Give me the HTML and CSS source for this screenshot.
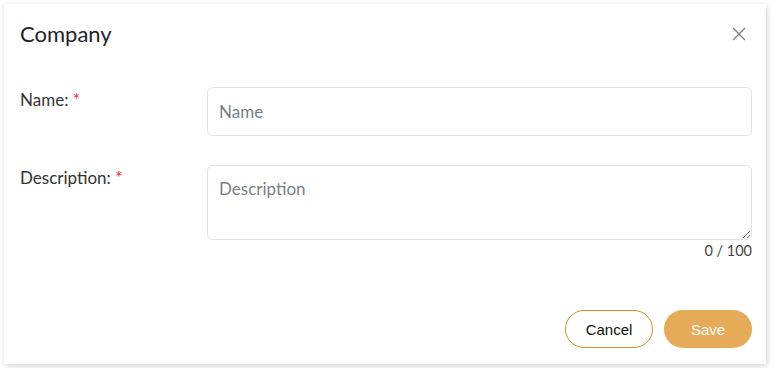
FILE: index.html
```html
<!DOCTYPE html>
<html lang="en">
<head>
    <meta charset="UTF-8">
    <meta name="viewport" content="width=device-width, initial-scale=1.0">
    <title>Company</title>
    <link rel="stylesheet" href="styles.css">
</head>
<body>
    <div class="dialog">
        <div class="dialog-header">
            <h2>Company</h2>
            <button class="close-btn" type="button" aria-label="Close">
                <svg width="14" height="14" viewBox="0 0 14 14">
                    <path d="M1 1 L13 13 M13 1 L1 13" stroke="#7a7f87" stroke-width="1.3" fill="none"/>
                </svg>
            </button>
        </div>
        <form class="company-form">
            <div class="form-row">
                <label for="name">Name: <span class="required">*</span></label>
                <div class="field">
                    <input type="text" id="name" name="name" placeholder="Name">
                </div>
            </div>
            <div class="form-row">
                <label for="description">Description: <span class="required">*</span></label>
                <div class="field">
                    <textarea id="description" name="description" placeholder="Description" maxlength="100"></textarea>
                    <div class="counter">0 / 100</div>
                </div>
            </div>
            <div class="actions">
                <button type="button" class="btn btn-cancel">Cancel</button>
                <button type="submit" class="btn btn-save">Save</button>
            </div>
        </form>
    </div>
</body>
</html>
```

FILE: styles.css
```css
body {
    margin: 0;
    padding: 4px;
    background: #fff;
    font-family: Lato, "Open Sans", sans-serif;
    color: #333;
}

.dialog {
    width: 762px;
    height: 360px;
    box-sizing: border-box;
    background: #fff;
    box-shadow: 1px 2px 6px rgba(0, 0, 0, 0.18);
    padding: 15px 14px 16px 16px;
    display: flex;
    flex-direction: column;
}

.dialog-header {
    display: flex;
    justify-content: space-between;
    align-items: center;
    height: 30px;
}

.dialog-header h2 {
    margin: 0;
    font-size: 22px;
    line-height: 30px;
    font-weight: 400;
    color: #1f2329;
}

.close-btn {
    background: none;
    border: none;
    padding: 0;
    margin-right: 6px;
    cursor: pointer;
    display: flex;
}

.company-form {
    margin-top: 38px;
    display: flex;
    flex-direction: column;
    flex: 1;
}

.form-row {
    display: flex;
    margin-bottom: 29px;
}

.form-row label {
    width: 187px;
    flex-shrink: 0;
    font-size: 17px;
    line-height: 24px;
    padding-top: 1px;
    color: #333;
}

.required {
    color: #f5222d;
}

.field {
    flex: 1;
    display: flex;
    flex-direction: column;
}

input[type="text"], textarea {
    box-sizing: border-box;
    width: 100%;
    border: 1px solid #e3e3e3;
    border-radius: 6px;
    font-family: Lato, "Open Sans", sans-serif;
    font-size: 17px;
    color: #333;
    padding: 0 11px;
}

input[type="text"] {
    height: 49px;
}

textarea {
    height: 75px;
    padding-top: 11px;
    line-height: 24px;
    resize: vertical;
    display: block;
}

input::placeholder, textarea::placeholder {
    color: #7b7f85;
}

.counter {
    text-align: right;
    font-size: 14.5px;
    line-height: 20px;
    margin-top: 1px;
    color: #444;
}

.form-row:nth-child(2) {
    margin-bottom: 0;
}

.actions {
    margin-top: auto;
    display: flex;
    justify-content: flex-end;
    gap: 11px;
}

.btn {
    width: 88px;
    height: 38px;
    border-radius: 19px;
    font-family: "Liberation Sans", Arial, sans-serif;
    font-size: 15px;
    cursor: pointer;
}

.btn-cancel {
    background: #fff;
    border: 1px solid #dc8f1f;
    color: #111;
}

.btn-save {
    background: #e6ab59;
    border: none;
    color: #fff;
}
```
